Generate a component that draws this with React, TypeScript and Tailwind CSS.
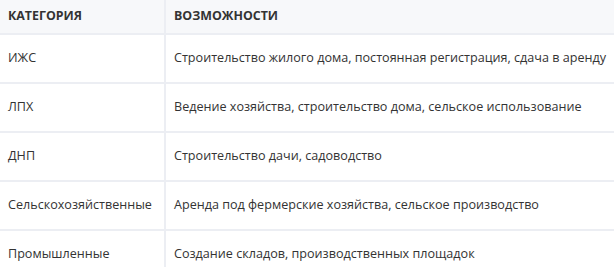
import React from "react";

const rows: [string, string][] = [
  ["ИЖС", "Строительство жилого дома, постоянная регистрация, сдача в аренду"],
  ["ЛПХ", "Ведение хозяйства, строительство дома, сельское использование"],
  ["ДНП", "Строительство дачи, садоводство"],
  ["Сельскохозяйственные", "Аренда под фермерские хозяйства, сельское производство"],
  ["Промышленные", "Создание складов, производственных площадок"],
];

export default function App() {
  return (
    <div className="w-[614px] h-[267px] overflow-hidden bg-white" style={{ fontFamily: '"Open Sans", "Noto Sans", sans-serif' }}>
      <table className="w-[640px] border-collapse text-[12.6px] text-[#333333]">
        <thead>
          <tr className="bg-[#f7f8fa]">
            <th className="w-[165px] h-[34px] px-2 text-left font-bold uppercase text-[12.4px] border-b-2 border-r-2 border-[#eceef3]">Категория</th>
            <th className="h-[34px] px-2 text-left font-bold uppercase text-[12.4px] border-b-2 border-[#eceef3]">Возможности</th>
          </tr>
        </thead>
        <tbody>
          {rows.map(([a, b]) => (
            <tr key={a}>
              <td className="h-[49px] px-2 border-b-2 border-r-2 border-[#eceef3] whitespace-nowrap">{a}</td>
              <td className="h-[49px] px-2 border-b-2 border-[#eceef3] whitespace-nowrap">{b}</td>
            </tr>
          ))}
        </tbody>
      </table>
    </div>
  );
}
